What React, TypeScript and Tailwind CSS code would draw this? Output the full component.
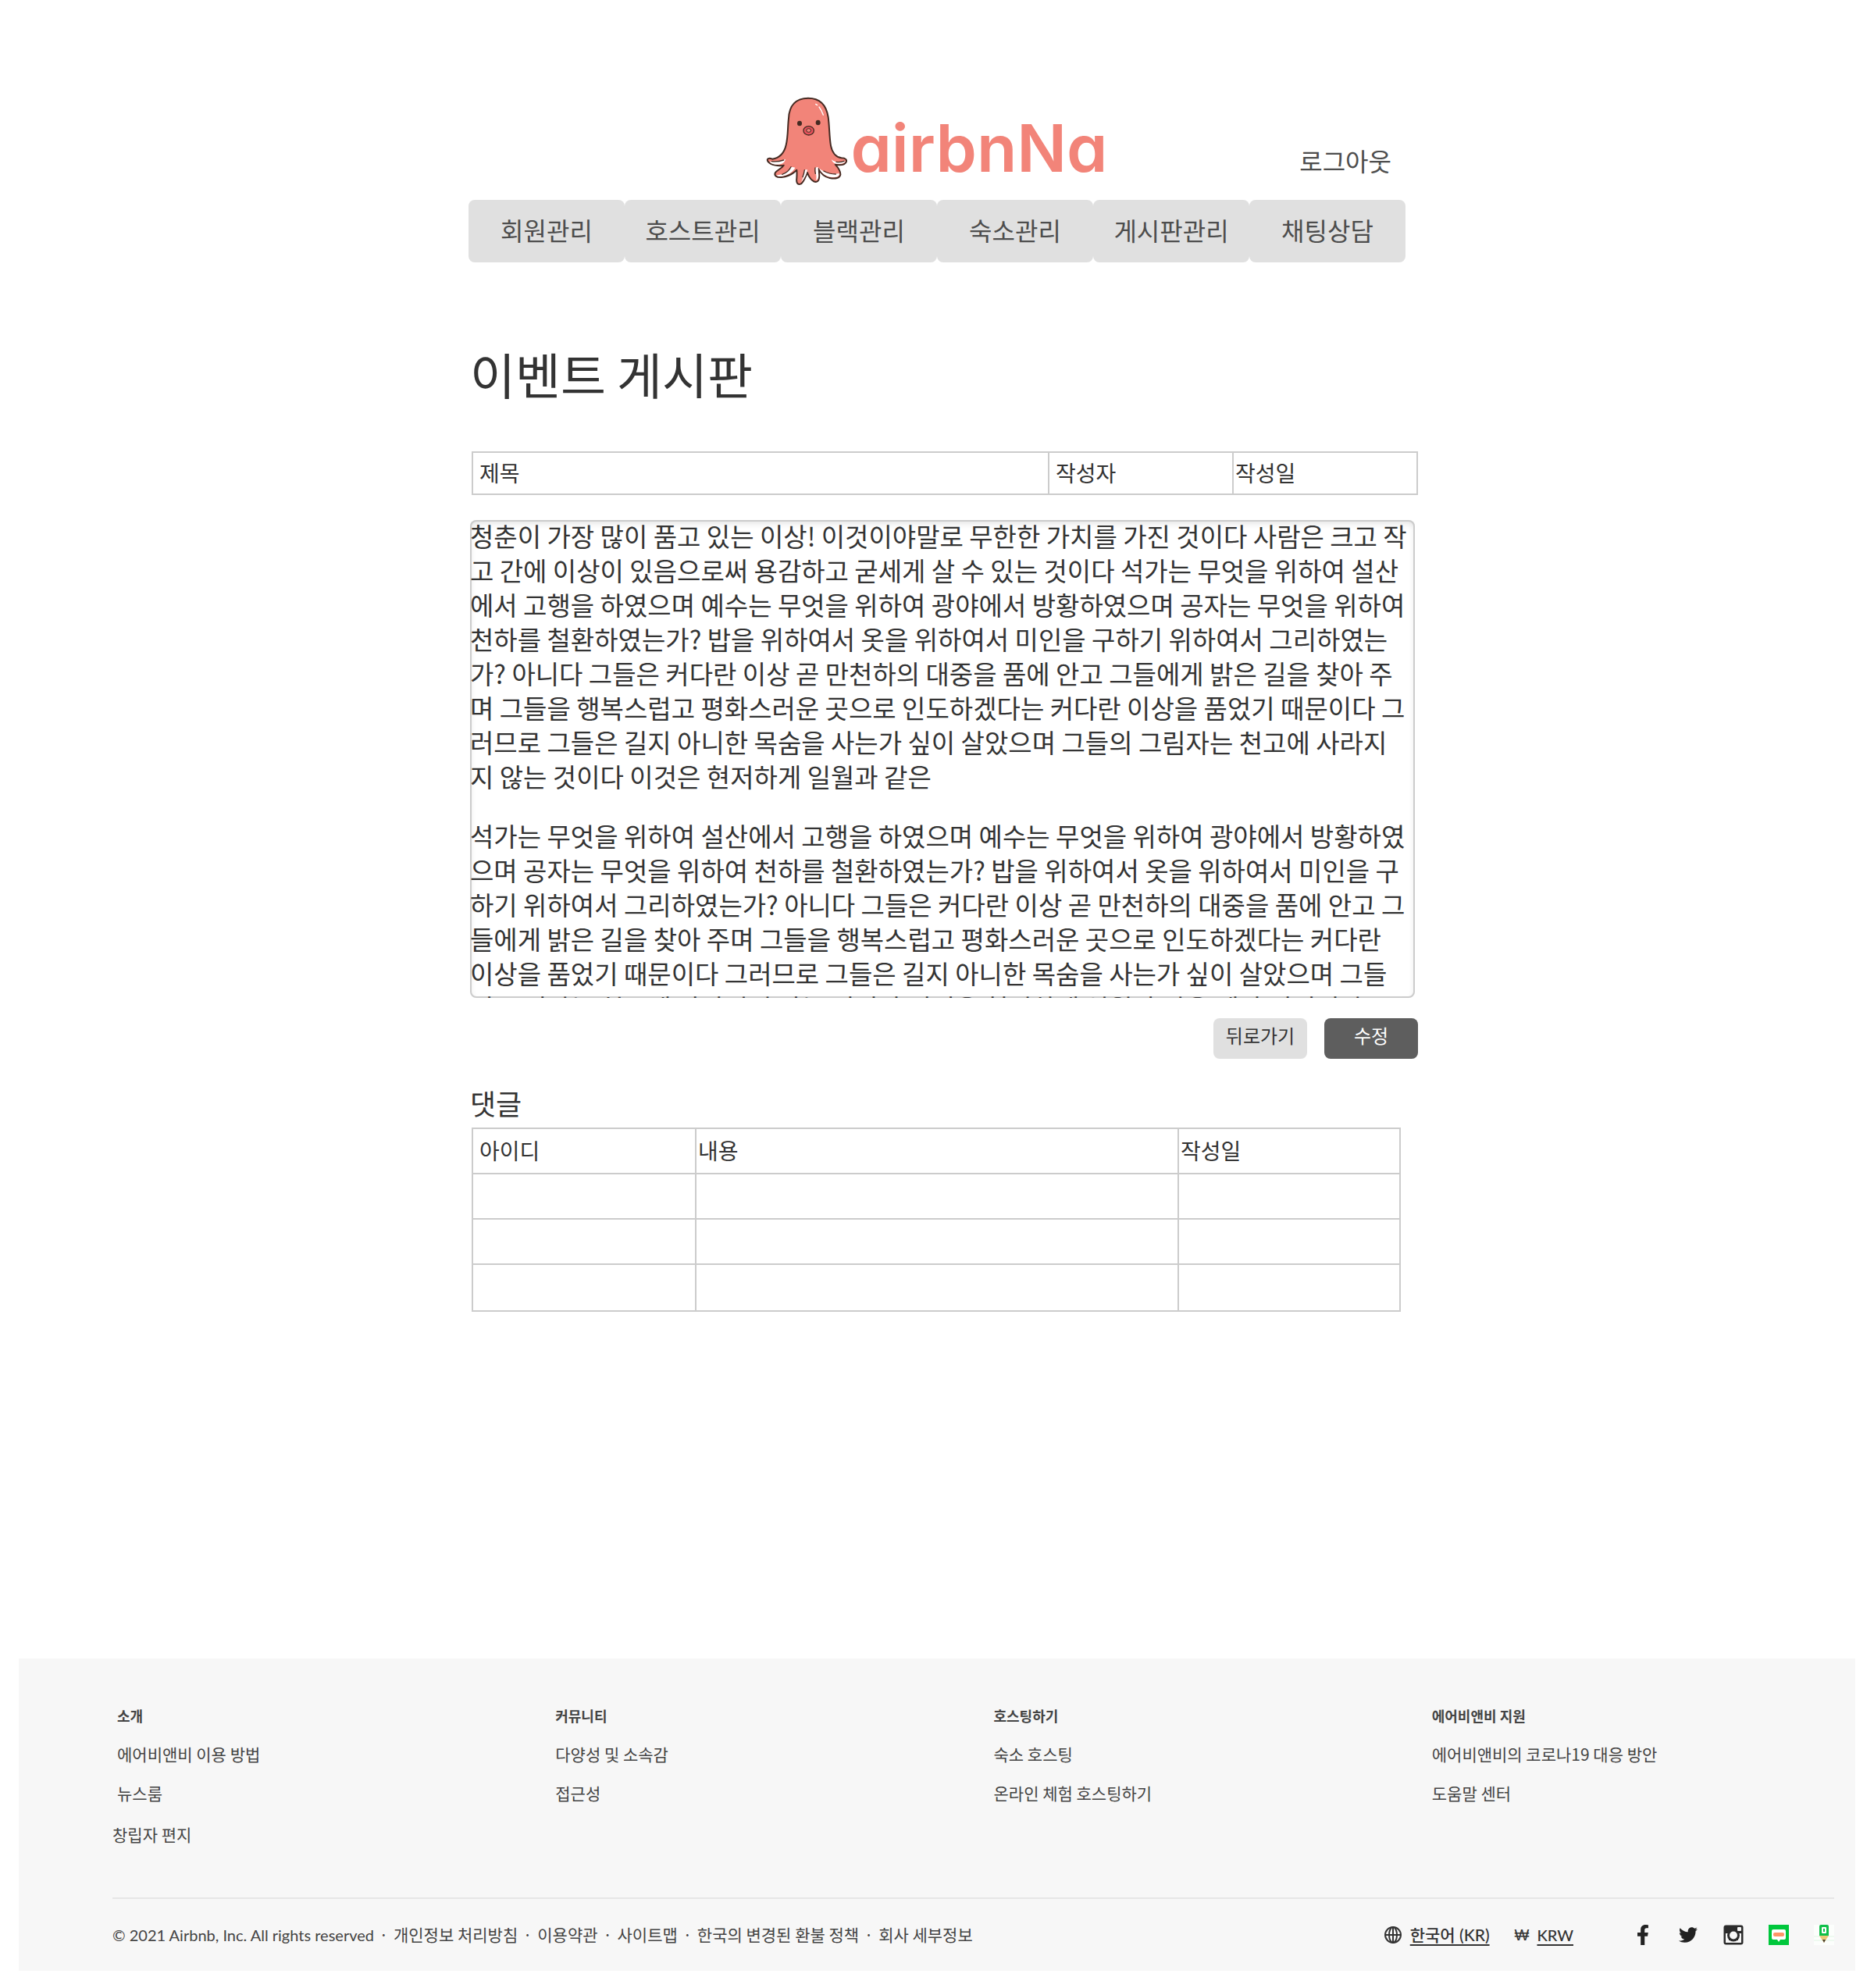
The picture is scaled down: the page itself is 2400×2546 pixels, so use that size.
import React from 'react';
import { FaFacebookF, FaTwitter } from 'react-icons/fa';

const NAV = ['회원관리', '호스트관리', '블랙관리', '숙소관리', '게시판관리', '채팅상담'];

const PARAGRAPHS = [
  '청춘이 가장 많이 품고 있는 이상! 이것이야말로 무한한 가치를 가진 것이다 사람은 크고 작고 간에 이상이 있음으로써 용감하고 굳세게 살 수 있는 것이다 석가는 무엇을 위하여 설산에서 고행을 하였으며 예수는 무엇을 위하여 광야에서 방황하였으며 공자는 무엇을 위하여 천하를 철환하였는가? 밥을 위하여서 옷을 위하여서 미인을 구하기 위하여서 그리하였는가? 아니다 그들은 커다란 이상 곧 만천하의 대중을 품에 안고 그들에게 밝은 길을 찾아 주며 그들을 행복스럽고 평화스러운 곳으로 인도하겠다는 커다란 이상을 품었기 때문이다 그러므로 그들은 길지 아니한 목숨을 사는가 싶이 살았으며 그들의 그림자는 천고에 사라지지 않는 것이다 이것은 현저하게 일월과 같은',
  '석가는 무엇을 위하여 설산에서 고행을 하였으며 예수는 무엇을 위하여 광야에서 방황하였으며 공자는 무엇을 위하여 천하를 철환하였는가? 밥을 위하여서 옷을 위하여서 미인을 구하기 위하여서 그리하였는가? 아니다 그들은 커다란 이상 곧 만천하의 대중을 품에 안고 그들에게 밝은 길을 찾아 주며 그들을 행복스럽고 평화스러운 곳으로 인도하겠다는 커다란 이상을 품었기 때문이다 그러므로 그들은 길지 아니한 목숨을 사는가 싶이 살았으며 그들의 그림자는 천고에 사라지지 않는 것이다 이것은 현저하게 일월과 같은 예가 되려니와',
];

const FOOTER_COLUMNS = [
  { title: '소개', links: ['에어비앤비 이용 방법', '뉴스룸'] },
  { title: '커뮤니티', links: ['다양성 및 소속감', '접근성'] },
  { title: '호스팅하기', links: ['숙소 호스팅', '온라인 체험 호스팅하기'] },
  { title: '에어비앤비 지원', links: ['에어비앤비의 코로나19 대응 방안', '도움말 센터'] },
];

const LEGAL = ['개인정보 처리방침', '이용약관', '사이트맵', '한국의 변경된 환불 정책', '회사 세부정보'];

const COMMENT_ROWS = ['h-[58px]', 'h-[58px]', 'h-[60px]'];

function Octopus() {
  return (
    <svg viewBox="30 27 312 339" className="h-[113px] w-[104px]" aria-hidden="true">
      <path
        d="M117 110C119 60 145 32 192 32C240 32 262 60 269 105C274 140 273 180 279 215C284 242 300 259 320 262C336 262 342 269 338 278C333 288 316 291 296 287C306 298 317 312 316 326C314 340 296 343 275 339C255 335 241 322 232 304C235 320 237 335 232 347C228 356 217 356 208 348C199 341 193 330 189 318C181 335 174 358 163 362C150 366 146 356 148 340C149 325 149 318 148 308C135 322 115 333 90 336C70 338 60 329 66 318C72 309 90 303 98 290C80 294 48 290 37 275C31 264 42 261 54 266C80 262 100 243 107 212C115 180 113 145 117 110Z"
        fill="#f28479"
        stroke="#442a22"
        strokeWidth="6"
        strokeLinejoin="round"
      />
      <g fill="#fff">
        <path d="M43 275C60 279 84 275 105 266C102 281 88 289 66 287C55 286 47 282 43 275Z" />
        <path d="M70 328C94 326 116 318 126 296L142 299C134 317 110 331 88 333C79 334 73 332 70 328Z" />
        <path d="M165 355C172 340 176 325 177 308L189 306C186 326 176 344 165 355Z" />
        <path d="M222 347C227 332 219 318 219 300L230 296C229 318 238 343 222 347Z" />
        <path d="M234 301C252 319 284 328 311 321C315 334 296 339 276 335C256 331 241 318 234 301Z" />
        <path d="M282 268C296 281 316 279 335 274C333 284 314 287 298 284C288 281 284 276 282 268Z" />
      </g>
      <g fill="none" stroke="#442a22" strokeWidth="4" strokeLinecap="round">
        <path d="M52 275C70 277 86 274 98 270" />
        <path d="M92 325C108 319 120 309 126 296" />
        <path d="M171 335C175 325 177 316 178 308" />
        <path d="M220 322C218 314 218 307 219 300" />
        <path d="M252 312C266 320 282 324 298 324" />
        <path d="M300 277C310 279 322 277 330 274" />
      </g>
      <ellipse cx="159" cy="129" rx="9" ry="10" fill="#442a22" />
      <ellipse cx="230" cy="126" rx="9" ry="10" fill="#442a22" />
      <ellipse cx="194" cy="157" rx="20" ry="17" fill="#e8525c" stroke="#442a22" strokeWidth="4" />
      <ellipse cx="194" cy="156" rx="9" ry="7" fill="#f28479" stroke="#442a22" strokeWidth="3" />
      <path d="M221 55L227 59M234 66C241 75 246 85 250 97" fill="none" stroke="#fff" strokeWidth="4" strokeLinecap="round" />
    </svg>
  );
}

function Globe() {
  return (
    <svg viewBox="0 0 24 24" className="size-6" fill="none" stroke="#333" strokeWidth="2" aria-hidden="true">
      <circle cx="12" cy="12" r="10" />
      <ellipse cx="12" cy="12" rx="5" ry="10" />
      <path d="M2 12H22M12 2V22" />
    </svg>
  );
}

function Instagram() {
  return (
    <svg viewBox="0 0 26 26" className="size-[26px]" aria-hidden="true">
      <rect x="0.5" y="0.5" width="25" height="25" rx="3" fill="#2b2b2b" />
      <path d="M3 11H7V22H3ZM19 11H23V22H19ZM3 20H23V23H3Z" fill="#f7f7f7" />
      <circle cx="13" cy="13.5" r="8" fill="#2b2b2b" />
      <circle cx="13" cy="13.5" r="5" fill="#f7f7f7" />
      <rect x="18" y="3" width="5" height="5" rx="1" fill="#f7f7f7" />
    </svg>
  );
}

function Blog() {
  return (
    <svg viewBox="0 0 26 26" className="size-[26px]" aria-hidden="true">
      <rect width="26" height="26" fill="#00c73c" />
      <path d="M6 6H20Q22 6 22 8V17Q22 19 20 19H15L13 22L11 19H6Q4 19 4 17V8Q4 6 6 6Z" fill="#fff" />
      <rect x="6" y="10" width="14" height="5" rx="2" fill="#ff9468" />
    </svg>
  );
}

function Pencil() {
  return (
    <svg viewBox="0 0 26 26" className="size-[26px]" aria-hidden="true">
      <rect width="26" height="26" fill="#fcfefc" />
      <path d="M0 15H26M0 20H26" stroke="#e0f5e4" />
      <path d="M7 2Q7 0 9 0H17Q19 0 19 2V14H7Z" fill="#0fc04a" />
      <rect x="10" y="3" width="6" height="8" rx="1" fill="#fff" />
      <rect x="12" y="5" width="2" height="4" fill="#0fc04a" />
      <path d="M7 14H19L13 23Z" fill="#ecc878" />
      <path d="M11 19H15L13 23Z" fill="#4a4032" />
    </svg>
  );
}

export default function App() {
  return (
    <div className="bg-white pb-[22px] font-['Noto_Sans_CJK_KR',sans-serif] text-[#333]">
      <div className="mx-auto w-full max-w-[1200px]">
        <header>
          <div className="grid grid-cols-[1fr_auto_1fr] items-end pt-[124px] pb-[19px]">
            <a href="#" className="col-start-2 flex items-end gap-1">
              <Octopus />
              <span className="mb-2 font-[Inter,sans-serif] text-[84px] leading-[78px] font-semibold text-[#f28479] [font-feature-settings:'cv11']">
                airbnNa
              </span>
            </a>
            <a href="#" className="mr-[18px] mb-2.5 justify-self-end text-[32px] leading-[44px] text-[#4d4d4d]">
              로그아웃
            </a>
          </div>
          <nav className="grid grid-cols-6">
            {NAV.map((item) => (
              <button key={item} type="button" className="h-20 rounded-lg bg-[#e0e0e0] pb-1 text-[32px] leading-[44px] text-[#4d4d4d]">
                {item}
              </button>
            ))}
          </nav>
        </header>

        <main className="-mr-4 ml-0.5">
          <h1 className="mt-[100px] text-[63px] leading-[84px]">이벤트 게시판</h1>

          <div className="ml-0.5">
            <table className="mt-[58px] w-full table-fixed border-collapse text-left text-[28px] leading-[40px]">
              <colgroup>
                <col />
                <col className="w-[236px]" />
                <col className="w-[236px]" />
              </colgroup>
              <thead>
                <tr className="h-[54px]">
                  <th className="border-2 border-[#ccc] pb-0.5 pl-2 font-normal">제목</th>
                  <th className="border-2 border-[#ccc] pb-0.5 pl-2 font-normal">작성자</th>
                  <th className="border-2 border-[#ccc] pb-0.5 pl-0.5 font-normal">작성일</th>
                </tr>
              </thead>
            </table>
          </div>

          <article className="mt-8 mr-1 h-[612px] overflow-hidden rounded-lg pr-2 text-[33px] leading-[44px] shadow-[inset_0_0_0_2px_#ccc,inset_0_4px_8px_rgba(0,0,0,0.12)]">
            <div className="-mt-0.5">
              {PARAGRAPHS.map((text) => (
                <p key={text} className="mb-8">
                  {text}
                </p>
              ))}
            </div>
          </article>

          <div className="mt-[26px] flex justify-end gap-[22px] text-2xl">
            <button type="button" className="h-[52px] w-[120px] rounded-lg bg-[#e0e0e0] pb-2">
              뒤로가기
            </button>
            <button type="button" className="h-[52px] w-[120px] rounded-lg bg-[#5e5e5e] pb-2 text-white">
              수정
            </button>
          </div>

          <h2 className="mt-8 text-4xl leading-[48px]">댓글</h2>
          <table className="mt-2 ml-0.5 w-[1190px] table-fixed border-collapse text-left text-[28px] leading-[40px]">
            <colgroup>
              <col className="w-[286px]" />
              <col />
              <col className="w-[284px]" />
            </colgroup>
            <thead>
              <tr className="h-[58px]">
                <th className="border-2 border-[#ccc] pb-0.5 pl-2 font-normal">아이디</th>
                <th className="border-2 border-[#ccc] pb-0.5 pl-0.5 font-normal">내용</th>
                <th className="border-2 border-[#ccc] pb-0.5 pl-0.5 font-normal">작성일</th>
              </tr>
            </thead>
            <tbody>
              {COMMENT_ROWS.map((height, row) => (
                <tr key={row} className={height}>
                  <td className="border-2 border-[#ccc]" />
                  <td className="border-2 border-[#ccc]" />
                  <td className="border-2 border-[#ccc]" />
                </tr>
              ))}
            </tbody>
          </table>
        </main>
      </div>

      <footer className="mx-6 mt-[444px] h-[400px] bg-[#f7f7f7] text-[21px] leading-[30px] text-[#444]">
        <div className="grid grid-cols-[561fr_561fr_561fr_542fr] pt-[59px] pl-[126px]">
          {FOOTER_COLUMNS.map((col) => (
            <section key={col.title} className="flex flex-col items-start gap-5">
              <h3 className="text-lg leading-7 font-bold">{col.title}</h3>
              {col.links.map((link) => (
                <a key={link} href="#">
                  {link}
                </a>
              ))}
            </section>
          ))}
        </div>
        <div className="mr-[27px] ml-[120px]">
          <a href="#" className="mt-[23px] block">
            창립자 편지
          </a>
          <div className="mt-[66px] flex items-center justify-between border-t-2 border-[#e6e6e6] pt-[30px]">
            <p className="flex items-baseline">
              <span className="font-[Lato,sans-serif] text-xl leading-[30px]">© 2021 Airbnb, Inc. All rights reserved</span>
              {LEGAL.map((item) => (
                <React.Fragment key={item}>
                  <span className="w-[25px] text-center">·</span>
                  <a href="#">{item}</a>
                </React.Fragment>
              ))}
            </p>
            <div className="flex items-center">
              <a href="#" className="flex items-center gap-2.5 font-medium text-[#333]">
                <Globe />
                <span className="font-[Lato,'Noto_Sans_CJK_KR',sans-serif] underline underline-offset-4">한국어 (KR)</span>
              </a>
              <a href="#" className="ml-8 flex items-center gap-2.5 text-xl font-medium text-[#333]">
                <span className="font-['Liberation_Sans',sans-serif]">₩</span>
                <span className="font-[Lato,sans-serif] underline underline-offset-4">KRW</span>
              </a>
              <div className="ml-[76px] flex gap-8 text-[#222]">
                <a href="#" aria-label="Facebook" className="flex size-[26px] items-center justify-center">
                  <FaFacebookF className="size-[26px]" />
                </a>
                <a href="#" aria-label="Twitter" className="flex size-[26px] items-center justify-center">
                  <FaTwitter className="size-6" />
                </a>
                <a href="#" aria-label="Instagram"><Instagram /></a>
                <a href="#" aria-label="Naver Blog"><Blog /></a>
                <a href="#" aria-label="Naver Post"><Pencil /></a>
              </div>
            </div>
          </div>
        </div>
      </footer>
    </div>
  );
}
